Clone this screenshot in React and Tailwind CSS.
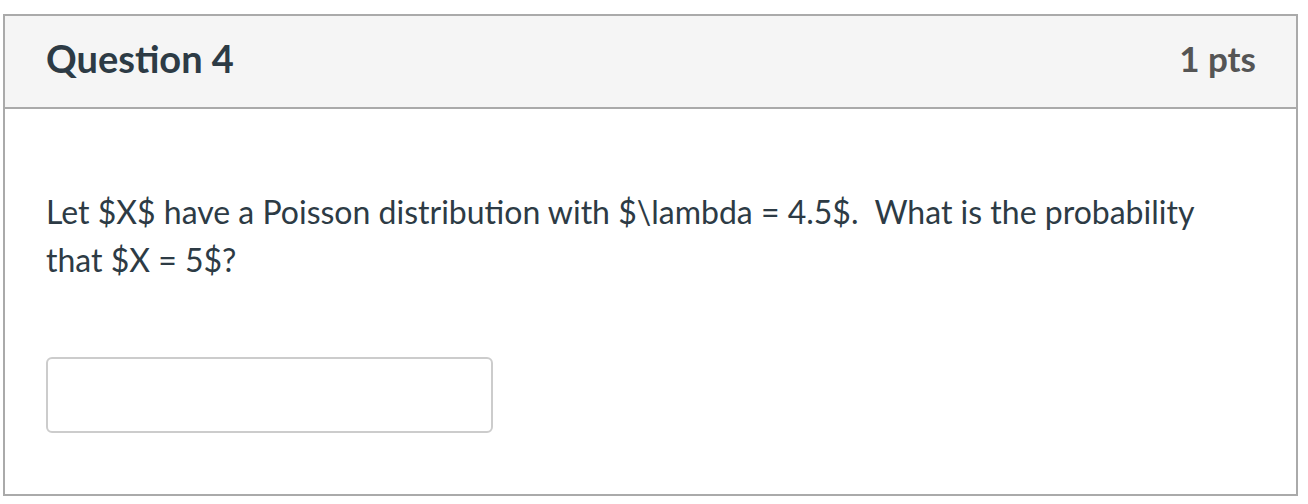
export default function App() {
  return (
    <div className="w-[1308px] h-[504px] bg-white pt-[14px] pl-[3px] font-['Lato',sans-serif]">
      <div className="w-[1295px] h-[482px] border-2 border-[#aaaaaa] flex flex-col">
        {/* Header */}
        <div className="h-[93px] shrink-0 bg-[#f5f5f5] border-b-2 border-[#aaaaaa] pl-[41px] pr-[40px] pb-[6px] flex items-center justify-between">
          <h2 className="text-[38px] font-bold text-[#2d3b45]">Question 4</h2>
          <span className="text-[35px] font-bold text-[#555555]">1 pts</span>
        </div>

        {/* Body */}
        <div className="flex-1 px-[41px] pt-[79px]">
          <p className="w-[1180px] text-[32px] leading-[48px] text-[#2d3b45]">
            Let $X$ have a Poisson distribution with $\lambda = 4.5$.{'\u00a0 '}What is the probability that $X = 5$?
          </p>
          <input
            type="text"
            className="mt-[73px] block w-[447px] h-[76px] border-2 border-[#cccccc] rounded-[6px] bg-white"
          />
        </div>
      </div>
    </div>
  );
}
